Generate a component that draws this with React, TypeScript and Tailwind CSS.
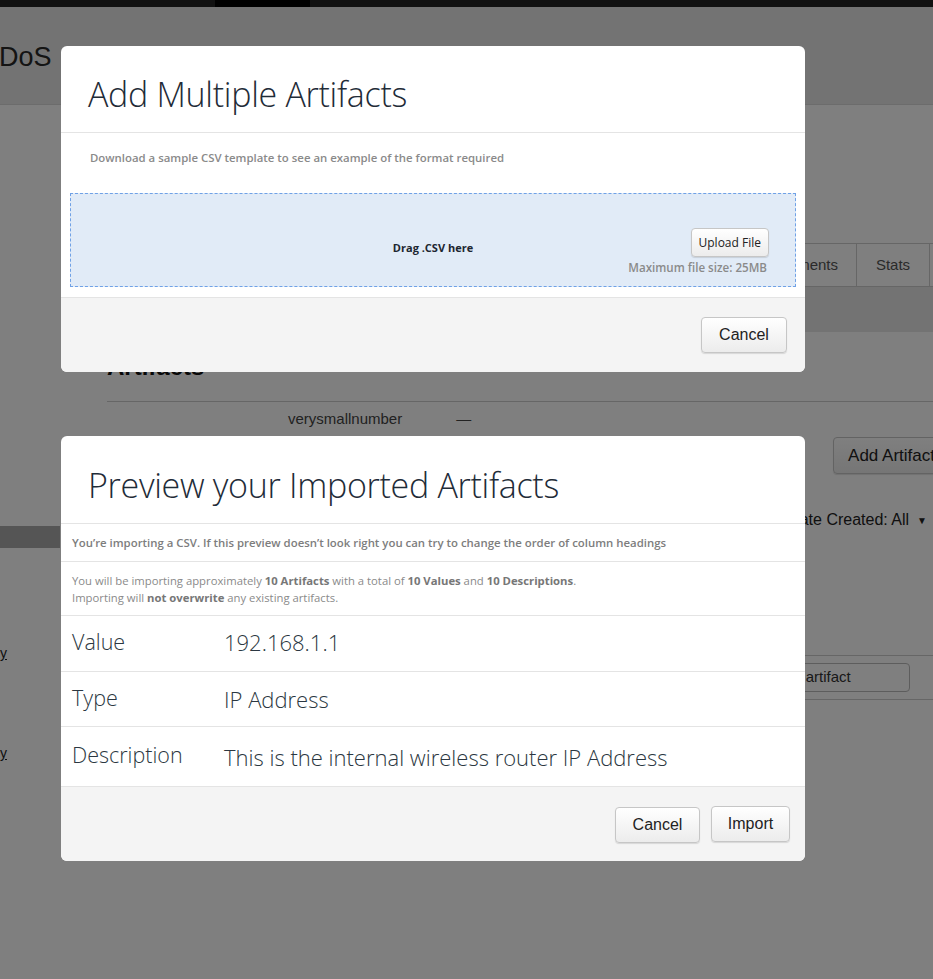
import React from "react";

const plex = { fontFamily: '"Open Sans", "Noto Sans", sans-serif' };
const helv = { fontFamily: '"Liberation Sans", Arial, sans-serif' };

const BtnGrad =
  "bg-gradient-to-b from-white to-[#ececec] border border-[#c6c6c6] rounded-[4px] shadow-[0_1px_1px_rgba(0,0,0,0.12)] text-[#222]";

const Background = () => (
  <div className="absolute inset-0 bg-white" style={helv}>
    <div className="h-[7px] bg-[#222] flex">
      <div className="ml-[215px] w-[95px] bg-black" />
    </div>
    <div className="h-[98px] bg-[#e7e7e7] border-b border-[#d9d9d9] pt-[33px]">
      <div className="text-[27px] text-[#282828] leading-[34px] -ml-[1px]">
        DoS<span className="ml-[34px]">Storm</span>
      </div>
    </div>
    <div className="flex">
      {/* left rail */}
      <div className="w-[60px] shrink-0">
        <div className="mt-[421px] h-[22px] bg-[#aaa]" />
        <div className="mt-[96px] text-[14px] text-[#222] underline leading-[18px]">y</div>
        <div className="mt-[82px] text-[14px] text-[#222] underline leading-[18px]">y</div>
      </div>
      <div className="flex-1 pl-[47px]">
        <div className="mt-[138px] flex justify-end border-b border-[#ccc] h-[44px]">
          <div className="px-[18px] flex items-center text-[15px] text-[#555] border-l border-t border-[#ccc]">Comments</div>
          <div className="w-[73px] flex items-center justify-center text-[15px] text-[#555] border-l border-t border-[#ccc]">Stats</div>
          <div className="w-[4px] border-l border-t border-[#ccc]" />
        </div>
        <div className="h-[45px] bg-[#e7e7e7]" />
        <div className="mt-[20px] text-[24px] font-bold text-[#111] leading-[30px]">Artifacts</div>
        <div className="mt-[19px] border-t border-[#ccc] flex items-center h-[36px] text-[15px] text-[#444]">
          <span className="ml-[181px]">verysmallnumber</span>
          <span className="ml-[54px]">—</span>
        </div>
        <div className="flex justify-end">
          <div className={`mr-[-35px] h-[37px] pl-[14px] pr-[32px] flex items-center text-[17px] ${BtnGrad}`}>Add Artifact</div>
        </div>
        <div className="mt-[34px] flex items-center justify-end pr-[6px] text-[16px] text-[#222]">
          Date Created: All <span className="ml-[8px] text-[10px]">▼</span>
        </div>
        <div className="mt-[123px] border-t border-[#ccc] h-[44px] flex items-center justify-end pr-[23px]">
          <div className="w-[300px] h-[29px] border border-[#bbb] rounded-[4px] flex items-center pl-[143px] text-[15px] text-[#333]">
            Search artifact
          </div>
        </div>
        <div className="border-t border-[#ccc]" />
      </div>
    </div>
  </div>
);

export default function App() {
  return (
    <div className="relative w-[933px] h-[979px] overflow-hidden">
      <Background />
      <div className="absolute inset-0 bg-black/50" />

      {/* Add Multiple Artifacts */}
      <div className="absolute left-[61px] top-[46px] w-[744px] bg-white rounded-[6px] overflow-hidden" style={plex}>
        <div className="h-[87px] pt-[28px] pl-[27px] border-b border-[#e4e4e4]">
          <h2 className="text-[34px] font-light leading-[40px] text-[#1f2c38] tracking-[-0.3px]">Add Multiple Artifacts</h2>
        </div>
        <div className="pt-[17px] pb-[10px]">
          <p className="pl-[29px] text-[11.4px] font-semibold leading-[16px] text-[#8a8a8a]">
            Download a sample CSV template to see an example of the format required
          </p>
          <div className="mt-[27px] mx-[9px] h-[94px] bg-[#e1ebf7] border border-dashed border-[#6fa1e6] grid grid-cols-[1fr_auto_1fr]">
            <div />
            <div className="flex items-center pt-[16px] text-[11px] font-bold text-[#1c2630]">Drag .CSV here</div>
            <div className="flex flex-col items-end justify-start pt-[34px] pr-[25px]">
              <div className={`h-[29px] px-[7px] flex items-center text-[12px] mr-[1px] ${BtnGrad}`} style={plex}>
                Upload File
              </div>
              <div className="mt-[4px] text-[11.6px] font-semibold text-[#8a8a8a] leading-[13px] mr-[3px]">Maximum file size: 25MB</div>
            </div>
          </div>
        </div>
        <div className="h-[75px] bg-[#f4f4f4] border-t border-[#e4e4e4] flex items-center justify-end pr-[18px]">
          <button className={`h-[36px] w-[86px] text-[16px] ${BtnGrad}`} style={helv}>Cancel</button>
        </div>
      </div>

      {/* Preview your Imported Artifacts */}
      <div className="absolute left-[61px] top-[436px] w-[744px] bg-white rounded-[6px] overflow-hidden" style={plex}>
        <div className="h-[88px] pt-[29px] pl-[27px] border-b border-[#e4e4e4]">
          <h2 className="text-[34px] font-light leading-[40px] text-[#1f2c38] tracking-[-0.3px]">Preview your Imported Artifacts</h2>
        </div>
        <div className="h-[38px] flex items-center pl-[11px] border-b border-[#e4e4e4] text-[11.4px] font-semibold text-[#7d7d7d]">
          You’re importing a CSV. If this preview doesn’t look right you can try to change the order of column headings
        </div>
        <div className="h-[54px] pt-[10px] pl-[11px] border-b border-[#e4e4e4] text-[11.3px] leading-[17px] text-[#8a8a8a]">
          <div>
            You will be importing approximately <b className="font-bold text-[#777]">10 Artifacts</b> with a total of{" "}
            <b className="font-bold text-[#777]">10 Values</b> and <b className="font-bold text-[#777]">10 Descriptions</b>.
          </div>
          <div>
            Importing will <b className="font-bold text-[#777]">not overwrite</b> any existing artifacts.
          </div>
        </div>
        {[
          { k: "Value", v: "192.168.1.1", h: "h-[56px]", pt: "pb-[2px]" },
          { k: "Type", v: "IP Address", h: "h-[55px]", pt: "pt-[0px]" },
          { k: "Description", v: "This is the internal wireless router IP Address", h: "h-[60px]", pt: "pt-[2px]" },
        ].map((r) => (
          <div key={r.k} className={`${r.h} flex items-center border-b border-[#e4e4e4] font-light text-[#2b3741]`}>
            <div className="w-[163px] pl-[11px] pb-[2px] text-[21.5px]">{r.k}</div>
            <div className={`${r.pt} text-[22px]`}>{r.v}</div>
          </div>
        ))}
        <div className="h-[74px] bg-[#f4f4f4] flex items-center justify-end pr-[15px] gap-[11px]">
          <button className={`h-[36px] w-[85px] mt-[2px] text-[16px] ${BtnGrad}`} style={helv}>Cancel</button>
          <button className={`h-[36px] w-[79px] text-[16px] ${BtnGrad}`} style={helv}>Import</button>
        </div>
      </div>
    </div>
  );
}
